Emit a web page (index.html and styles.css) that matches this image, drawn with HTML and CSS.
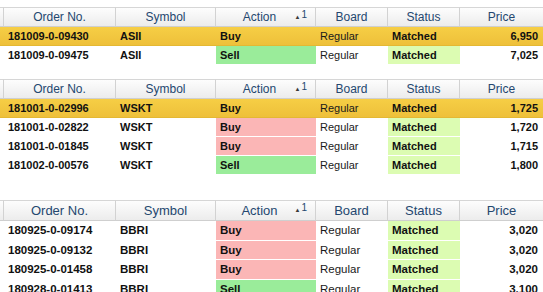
FILE: index.html
```html
<!DOCTYPE html>
<html>
<head>
<meta charset="utf-8">
<link rel="stylesheet" href="styles.css">
</head>
<body>
<div class="page">
  <table class="grid g1">
    <colgroup><col class="c0"><col class="c1"><col class="c2"><col class="c3"><col class="c4"><col class="c5"><col class="c6"></colgroup>
    <thead>
      <tr><th></th><th>Order No.</th><th>Symbol</th><th class="sorted">Action<span class="sort">&#9650;<sup>1</sup></span></th><th>Board</th><th>Status</th><th>Price</th></tr>
    </thead>
    <tbody>
      <tr class="sel"><td></td><td>181009-0-09430</td><td>ASII</td><td>Buy</td><td class="reg">Regular</td><td>Matched</td><td class="num">6,950</td></tr>
      <tr><td></td><td>181009-0-09475</td><td>ASII</td><td class="sell">Sell</td><td class="reg">Regular</td><td class="match">Matched</td><td class="num">7,025</td></tr>
    </tbody>
  </table>

  <table class="grid g2">
    <colgroup><col class="c0"><col class="c1"><col class="c2"><col class="c3"><col class="c4"><col class="c5"><col class="c6"></colgroup>
    <thead>
      <tr><th></th><th>Order No.</th><th>Symbol</th><th class="sorted">Action<span class="sort">&#9650;<sup>1</sup></span></th><th>Board</th><th>Status</th><th>Price</th></tr>
    </thead>
    <tbody>
      <tr class="sel"><td></td><td>181001-0-02996</td><td>WSKT</td><td>Buy</td><td class="reg">Regular</td><td>Matched</td><td class="num">1,725</td></tr>
      <tr><td></td><td>181001-0-02822</td><td>WSKT</td><td class="buy">Buy</td><td class="reg">Regular</td><td class="match">Matched</td><td class="num">1,720</td></tr>
      <tr><td></td><td>181001-0-01845</td><td>WSKT</td><td class="buy">Buy</td><td class="reg">Regular</td><td class="match">Matched</td><td class="num">1,715</td></tr>
      <tr><td></td><td>181002-0-00576</td><td>WSKT</td><td class="sell">Sell</td><td class="reg">Regular</td><td class="match">Matched</td><td class="num">1,800</td></tr>
    </tbody>
  </table>

  <table class="grid g3">
    <colgroup><col class="c0"><col class="c1"><col class="c2"><col class="c3"><col class="c4"><col class="c5"><col class="c6"></colgroup>
    <thead>
      <tr><th></th><th>Order No.</th><th>Symbol</th><th class="sorted">Action<span class="sort">&#9650;<sup>1</sup></span></th><th>Board</th><th>Status</th><th>Price</th></tr>
    </thead>
    <tbody>
      <tr><td></td><td>180925-0-09174</td><td>BBRI</td><td class="buy">Buy</td><td class="reg">Regular</td><td class="match">Matched</td><td class="num">3,020</td></tr>
      <tr><td></td><td>180925-0-09132</td><td>BBRI</td><td class="buy">Buy</td><td class="reg">Regular</td><td class="match">Matched</td><td class="num">3,020</td></tr>
      <tr><td></td><td>180925-0-01458</td><td>BBRI</td><td class="buy">Buy</td><td class="reg">Regular</td><td class="match">Matched</td><td class="num">3,020</td></tr>
      <tr><td></td><td>180928-0-01413</td><td>BBRI</td><td class="sell">Sell</td><td class="reg">Regular</td><td class="match">Matched</td><td class="num">3,100</td></tr>
    </tbody>
  </table>
</div>
</body>
</html>
```

FILE: styles.css
```css
html, body {
  margin: 0;
  padding: 0;
  background: #ffffff;
}
.page {
  display: flex;
  flex-direction: column;
  padding-top: 7px;
  width: 543px;
}
.grid {
  width: 543px;
  table-layout: fixed;
  border-collapse: separate;
  border-spacing: 0;
  font-family: "Liberation Sans", Arial, sans-serif;
  font-size: 11px;
  color: #111;
}
.g1 { margin-bottom: 14px; }
.g2 { margin-bottom: 25px; }
.c0 { width: 4px; }
.c1 { width: 112px; }
.c2 { width: 100px; }
.c3 { width: 100px; }
.c4 { width: 72px; }
.c5 { width: 72px; }
.c6 { width: 83px; }

.grid th {
  height: 18px;
  padding: 0;
  font-weight: normal;
  font-size: 12px;
  color: #24476f;
  text-align: center;
  background: linear-gradient(#fdfdfd, #ececec);
  border-top: 1px solid #d6d6d6;
  border-bottom: 1px solid #cfcfcf;
  border-right: 1px solid #d2d2d2;
  white-space: nowrap;
}
.grid th:last-child { border-right: none; }
.grid th.sorted {
  position: relative;
  padding-right: 12px;
}
.sort {
  position: absolute;
  right: 8px;
  top: 2px;
  font-size: 6px;
  color: #3a3a3a;
}
.sort sup {
  font-size: 10px;
  vertical-align: 0;
  position: relative;
  top: -1px;
  margin-left: 1px;
  color: #24476f;
}

.grid td {
  height: 18px;
  padding: 0 4px;
  font-weight: bold;
  white-space: nowrap;
  overflow: hidden;
  border-bottom: 1px solid #ffffff;
  background: #ffffff;
}
.grid td:first-child { padding: 0; }
.grid td.reg { font-weight: normal; color: #1a1a1a; }
.grid td.num { text-align: right; padding-right: 5px; }
.grid td.buy { background: #fbb6b6; }
.grid td.sell { background: #9aec9a; }
.grid td.match { background: #dcfcb2; }
.grid tr.sel td {
  background: linear-gradient(#f6ce45, #eec03a);
  border-bottom-color: #e4b833;
}

.g3 th {
  height: 19px;
  font-size: 13px;
}
.g3 td {
  font-size: 11.5px;
  height: 18.5px;
}
```
